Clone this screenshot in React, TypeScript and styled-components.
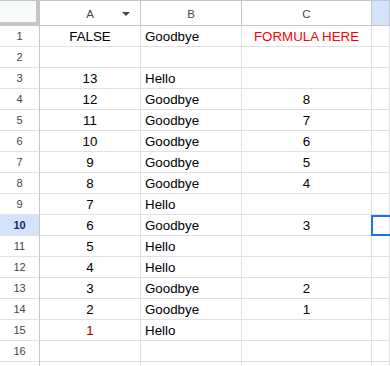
import React from "react";
import styled, { createGlobalStyle, css } from "styled-components";

const Global = createGlobalStyle`
  html, body { margin: 0; padding: 0; background: #fff; overflow: hidden; }
  body { font-family: "Liberation Sans", Arial, sans-serif; }
  * { box-sizing: border-box; }
`;

const HEADER_LINE = "#c4c7c5";
const GRID_LINE = "#e1e1e1";

const Sheet = styled.div`
  display: grid;
  grid-template-columns: 40px 101px 101px 130px 1fr;
  grid-auto-rows: 21px;
  grid-template-rows: 26px;
  width: 390px;
  height: 366px;
  overflow: hidden;
`;

const Corner = styled.div`
  background: #f8f9fa;
  border-top: 1px solid ${HEADER_LINE};
  border-right: 4px solid ${HEADER_LINE};
  border-bottom: 4px solid ${HEADER_LINE};
`;

const ColHeader = styled.div<{ $selected?: boolean }>`
  position: relative;
  display: flex;
  align-items: center;
  justify-content: center;
  background: ${(p) => (p.$selected ? "#d3e3fd" : "#fff")};
  border-top: 1px solid ${HEADER_LINE};
  border-right: 1px solid ${HEADER_LINE};
  border-bottom: 1px solid ${HEADER_LINE};
  font-size: 11.5px;
  color: #444746;
  padding-top: 1px;
`;

const DropArrow = styled.span`
  position: absolute;
  right: 10px;
  top: 11px;
  width: 0;
  height: 0;
  border-left: 4px solid transparent;
  border-right: 4px solid transparent;
  border-top: 4px solid #444746;
`;

const RowHeader = styled.div<{ $selected?: boolean }>`
  display: flex;
  align-items: center;
  justify-content: center;
  border-right: 1px solid ${HEADER_LINE};
  border-bottom: 1px solid ${GRID_LINE};
  font-size: 11px;
  color: #444746;
  ${(p) =>
    p.$selected &&
    css`
      background: #d3e3fd;
      color: #0b2a5c;
      font-weight: bold;
    `}
`;

const Cell = styled.div<{ $align?: "left" | "center"; $color?: string }>`
  position: relative;
  display: flex;
  align-items: center;
  justify-content: ${(p) => (p.$align === "center" ? "center" : "flex-start")};
  padding: 0 4px;
  border-right: 1px solid ${GRID_LINE};
  border-bottom: 1px solid ${GRID_LINE};
  font-size: 13.33px;
  color: ${(p) => p.$color || "#000"};
  white-space: nowrap;
  overflow: visible;
`;

const Selection = styled.div`
  position: absolute;
  left: -1px;
  top: 0;
  bottom: -1px;
  right: -10px;
  border: 2px solid #1a73e8;
  pointer-events: none;
`;

type Row = {
  a?: string;
  aColor?: string;
  b?: string;
  c?: string;
  cColor?: string;
};

const rows: Row[] = [
  { a: "FALSE", b: "Goodbye", c: "FORMULA HERE", cColor: "#ff0000" },
  {},
  { a: "13", b: "Hello" },
  { a: "12", b: "Goodbye", c: "8" },
  { a: "11", b: "Goodbye", c: "7" },
  { a: "10", b: "Goodbye", c: "6" },
  { a: "9", b: "Goodbye", c: "5" },
  { a: "8", b: "Goodbye", c: "4" },
  { a: "7", b: "Hello" },
  { a: "6", b: "Goodbye", c: "3" },
  { a: "5", b: "Hello" },
  { a: "4", b: "Hello" },
  { a: "3", b: "Goodbye", c: "2" },
  { a: "2", b: "Goodbye", c: "1" },
  { a: "1", aColor: "#990000", b: "Hello" },
  {},
  {},
];

const SELECTED_ROW = 10;

export default function App() {
  return (
    <>
      <Global />
      <Sheet>
        <Corner />
        <ColHeader>
          A
          <DropArrow />
        </ColHeader>
        <ColHeader>B</ColHeader>
        <ColHeader>C</ColHeader>
        <ColHeader $selected />
        {rows.map((r, i) => {
          const n = i + 1;
          const sel = n === SELECTED_ROW;
          return (
            <React.Fragment key={n}>
              <RowHeader $selected={sel}>{n <= 16 ? n : ""}</RowHeader>
              <Cell $align="center" $color={r.aColor}>
                {r.a}
              </Cell>
              <Cell>{r.b}</Cell>
              <Cell $align="center" $color={r.cColor}>
                {r.c}
              </Cell>
              <Cell>{sel && <Selection />}</Cell>
            </React.Fragment>
          );
        })}
      </Sheet>
    </>
  );
}
